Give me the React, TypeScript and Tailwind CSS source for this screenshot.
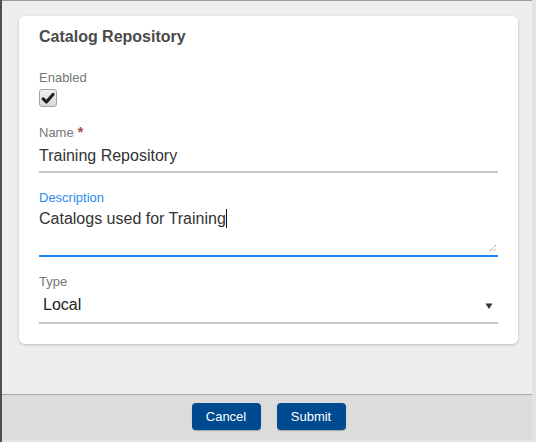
import React from "react";

function Check() {
  return (
    <svg width="14" height="14" viewBox="0 0 14 14">
      <path d="M2.2 7.8 L5.4 11 L12 3.4" fill="none" stroke="#222" strokeWidth="3.1" strokeLinecap="round" strokeLinejoin="round" />
    </svg>
  );
}

function Resize() {
  return (
    <svg width="8" height="8" viewBox="0 0 8 8" className="absolute right-[1px] bottom-[3px]">
      <path d="M1 7 L7 1 M4.5 7 L7 4.5" stroke="#666" strokeWidth="0.9" strokeDasharray="1 0.8" />
    </svg>
  );
}

export default function App() {
  return (
    <div
      className="w-[536px] h-[442px] flex overflow-hidden"
      style={{ fontFamily: '"Liberation Sans", Arial, sans-serif' }}
    >
      <div className="w-[2px] bg-[#4f4f4f]" />
      <div className="flex-1 flex flex-col">
        <div className="h-px bg-[#9c9c9c]" />
        <main className="flex-1 bg-[#eeeeee] pl-[17px] pt-[15px]">
          <div className="w-[499px] bg-white rounded-[6px] shadow-[0_1px_3px_rgba(0,0,0,0.22)] pt-[11px] pb-[20px] px-[20px]">
            <div className="text-[16px] leading-[20px] font-bold text-[#4a4a4a]">Catalog Repository</div>

            <div className="mt-[23px] text-[13px] leading-[16px] text-[#777777]">Enabled</div>
            <div className="mt-[3px] w-[18px] h-[18px] rounded-[3px] border border-[#a3a3a3] bg-gradient-to-b from-[#f0f0f0] to-[#d9d9d9] flex items-center justify-center">
              <Check />
            </div>

            <div className="mt-[18px] text-[13px] leading-[16px] text-[#777777] flex items-start">
              <span>Name</span>
              <span className="ml-[4px] text-[14px] leading-[14px] font-bold text-[#a94442]">*</span>
            </div>
            <div className="mt-[5px] pb-[5px] border-b-2 border-[#c6c6c6] text-[16px] leading-[20px] text-[#333333]">
              Training Repository
            </div>

            <div className="mt-[17px] text-[13px] leading-[16px] text-[#2a8af0]">Description</div>
            <div className="relative mt-[3px] h-[48px] border-b-2 border-[#1689f5] text-[16px] leading-[20px] text-[#333333]">
              <span>Catalogs used for Training</span>
              <span className="inline-block w-px h-[19px] bg-[#111] align-[-4px]" />
              <Resize />
            </div>

            <div className="mt-[17px] text-[13px] leading-[16px] text-[#777777]">Type</div>
            <div className="mt-[5px] pb-[7px] border-b-2 border-[#c6c6c6] flex items-center justify-between text-[16px] leading-[20px] text-[#222222]">
              <span className="pl-[4px]">Local</span>
              <svg width="8" height="8" viewBox="0 0 8 8" className="mr-[5px] mt-[2px]">
                <path d="M0.5 1.5 L7.5 1.5 L4 7 Z" fill="#333" />
              </svg>
            </div>
          </div>
        </main>
        <div className="h-px bg-[#a9a9a9]" />
        <footer className="h-[45px] bg-[#dcdcdc] flex items-center justify-center gap-[16px] pb-[2px] pl-[3px]">
          <button className="w-[69px] h-[27px] rounded-[4px] bg-[#004b8f] text-white text-[13px] shadow-[0_1px_1px_rgba(0,0,0,0.25)]">
            Cancel
          </button>
          <button className="w-[69px] h-[27px] rounded-[4px] bg-[#004b8f] text-white text-[13px] shadow-[0_1px_1px_rgba(0,0,0,0.25)]">
            Submit
          </button>
        </footer>
        <div className="h-[2px] bg-[#e3e6e9]" />
      </div>
      <div className="w-[4px] bg-[#e0e2e4]" />
    </div>
  );
}
